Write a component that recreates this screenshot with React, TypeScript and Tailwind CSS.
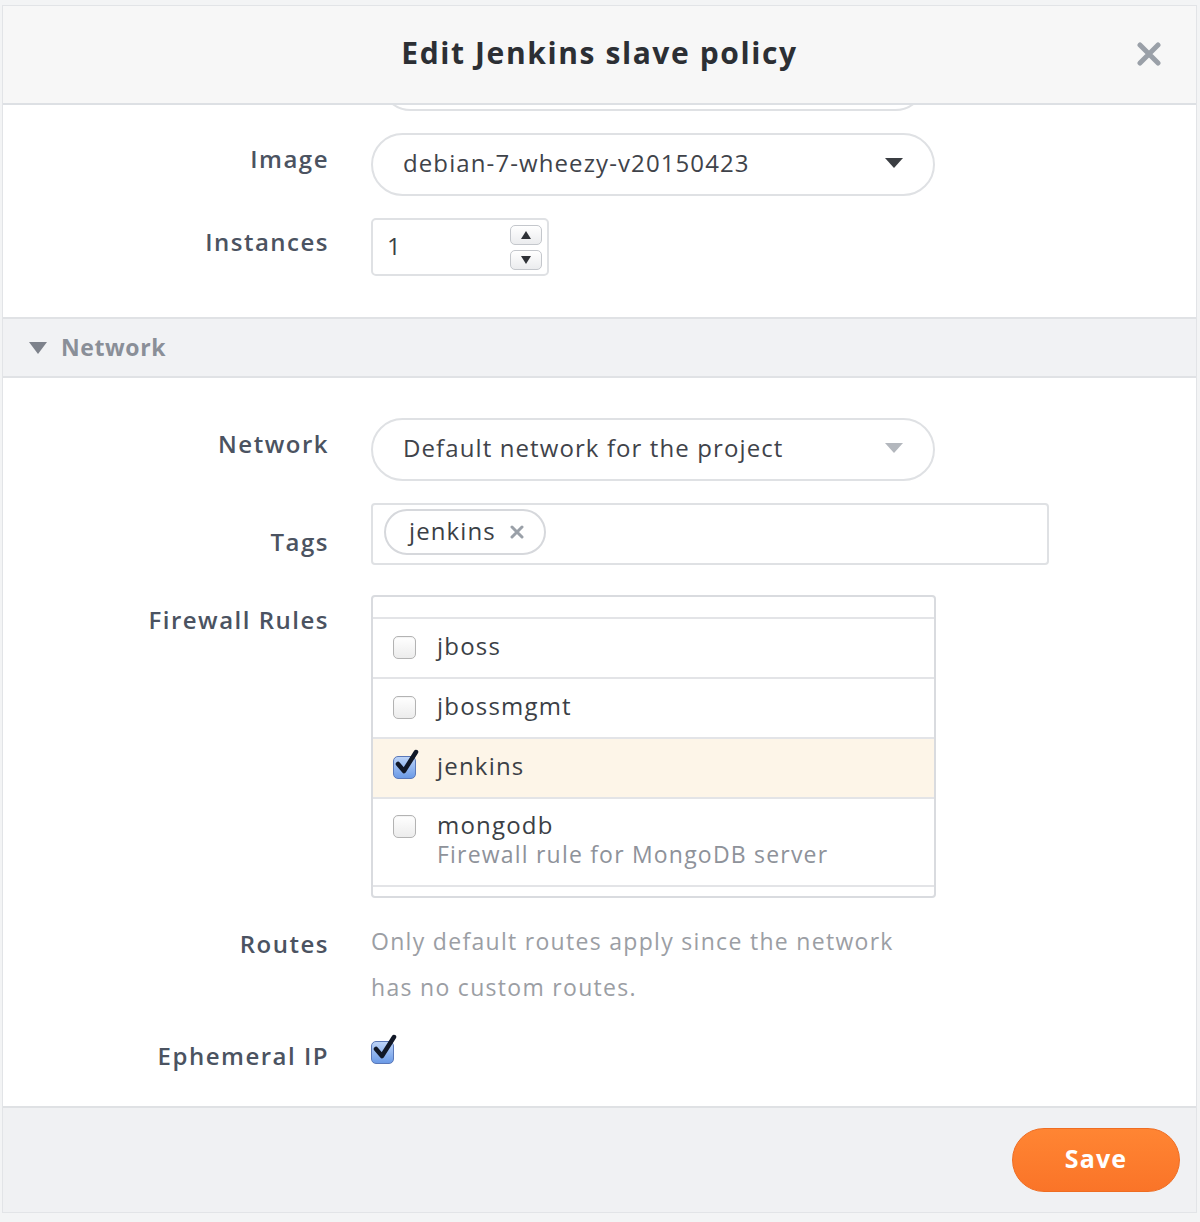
import React from 'react';

const font = { fontFamily: '"Open Sans", "Liberation Sans", sans-serif' };

function Box({ checked = false }: { checked?: boolean }) {
  if (!checked) {
    return (
      <div className="w-[23px] h-[23px] rounded-[5px] border border-[#b3b3b3] bg-gradient-to-b from-white to-[#ececec] shadow-[inset_0_1px_1px_rgba(0,0,0,0.05)]" />
    );
  }
  return (
    <div className="relative w-[23px] h-[23px]">
      <div className="w-[23px] h-[23px] rounded-[5px] border border-[#5a78b8] bg-gradient-to-b from-[#bcd3f7] to-[#6b9ae6]" />
      <svg className="absolute left-[1px] -top-[7px]" width="26" height="28" viewBox="0 0 26 28">
        <path d="M4 15 L10 22 L22 3" fill="none" stroke="#111827" strokeWidth="4.5" strokeLinecap="round" strokeLinejoin="round" />
      </svg>
    </div>
  );
}

function Row({ label, pt, children, className = '' }: { label: string; pt: string; children: React.ReactNode; className?: string }) {
  return (
    <div className={`flex items-start ${className}`}>
      <div className={`w-[326px] shrink-0 text-right text-[24px] leading-[32px] font-semibold tracking-[1.5px] text-[#4b5361] ${pt}`}>{label}</div>
      <div className="ml-[42px]">{children}</div>
    </div>
  );
}

function Select({ value, light = false }: { value: string; light?: boolean }) {
  return (
    <div className="w-[564px] h-[63px] rounded-full border-2 border-[#dfe1e4] bg-white flex items-center justify-between pl-[30px] pr-[30px] pb-[3px]">
      <span className="text-[24px] tracking-[1.1px] text-[#3f434a]">{value}</span>
      <svg width="18" height="10" viewBox="0 0 18 10">
        <path d="M0 0 H18 L9 10 Z" fill={light ? '#b3b7bd' : '#3a3d42'} />
      </svg>
    </div>
  );
}

function Rule({ name, desc, checked = false }: { name: string; desc?: string; checked?: boolean }) {
  return (
    <div className={`flex items-start pl-[20px] border-t-2 border-[#e3e4e7] ${checked ? 'bg-[#fdf5e8]' : 'bg-white'} ${desc ? 'h-[88px] pt-[16px]' : 'h-[60px] pt-[17px]'}`}>
      <Box checked={checked} />
      <div className="ml-[21px] -mt-[5px] tracking-[1.2px]">
        <div className="text-[24px] leading-[30px] text-[#3b3f46]">{name}</div>
        {desc && <div className="text-[23px] leading-[28px] text-[#8e929a]">{desc}</div>}
      </div>
    </div>
  );
}

export default function App() {
  return (
    <div className="w-[1200px] h-[1222px] bg-[#f3f4f5] pt-[5px] pl-[2px] pr-[3px] pb-[9px]" style={font}>
      <div className="h-full flex flex-col border border-[#e2e4e7] bg-white overflow-hidden">
        {/* Header */}
        <header className="h-[99px] shrink-0 relative flex items-center justify-center pb-[4px] bg-[#f7f7f7] border-b-2 border-[#dde0e4]">
          <h1 className="text-[30px] font-bold text-[#2c2f34] tracking-[1.6px]">Edit Jenkins slave policy</h1>
          <svg className="absolute right-[35px] top-[36px]" width="24" height="24" viewBox="0 0 24 24">
            <path d="M3 3 L21 21 M21 3 L3 21" stroke="#9aa0a8" strokeWidth="5" strokeLinecap="round" />
          </svg>
        </header>

        {/* Body */}
        <div className="flex-1 overflow-hidden">
          <div className="ml-[377px] -mt-[55px] w-[546px] h-[61px] rounded-full border-2 border-[#dfe1e4]" />

          <Row label="Image" pt="pt-[10px]" className="mt-[22px]">
            <Select value="debian-7-wheezy-v20150423" />
          </Row>

          <Row label="Instances" pt="pt-[8px]" className="mt-[22px]">
            <div className="w-[178px] h-[58px] rounded-[5px] border-2 border-[#dfe1e4] flex items-center justify-between pl-[14px] pr-[5px]">
              <span className="text-[24px] text-[#3b3f46] pb-[3px]">1</span>
              <div className="flex flex-col gap-[5px]">
                <div className="w-[32px] h-[20px] rounded-[5px] border border-[#c4c7cc] bg-gradient-to-b from-white to-[#ebecee] flex items-center justify-center">
                  <svg width="10" height="8" viewBox="0 0 10 8"><path d="M5 0 L10 8 H0 Z" fill="#2f3237" /></svg>
                </div>
                <div className="w-[32px] h-[20px] rounded-[5px] border border-[#c4c7cc] bg-gradient-to-b from-white to-[#ebecee] flex items-center justify-center">
                  <svg width="10" height="8" viewBox="0 0 10 8"><path d="M0 0 H10 L5 8 Z" fill="#2f3237" /></svg>
                </div>
              </div>
            </div>
          </Row>

          {/* Network section */}
          <div className="mt-[41px] h-[61px] bg-[#f1f2f4] border-y-2 border-[#e0e2e5] flex items-center pl-[26px]">
            <svg width="18" height="12" viewBox="0 0 18 12"><path d="M0 0 H18 L9 12 Z" fill="#7d828b" /></svg>
            <span className="ml-[14px] text-[23px] font-bold tracking-[0.6px] text-[#8a8f98]">Network</span>
          </div>

          <Row label="Network" pt="pt-[10px]" className="mt-[40px]">
            <Select value="Default network for the project" light />
          </Row>

          <Row label="Tags" pt="pt-[23px]" className="mt-[22px]">
            <div className="w-[678px] h-[62px] rounded-[4px] border-2 border-[#dfe1e4] flex items-center pl-[11px]">
              <div className="h-[46px] rounded-full border-2 border-[#d6d8dc] flex items-center pl-[23px] pr-[20px] mb-[4px]">
                <span className="text-[24px] tracking-[1.1px] text-[#3b3f46] pb-[2px]">jenkins</span>
                <svg className="ml-[14px]" width="14" height="14" viewBox="0 0 14 14">
                  <path d="M2 2 L12 12 M12 2 L2 12" stroke="#9aa0a8" strokeWidth="3" strokeLinecap="round" />
                </svg>
              </div>
            </div>
          </Row>

          <Row label="Firewall Rules" pt="pt-[9px]" className="mt-[30px]">
            <div className="w-[565px] h-[303px] rounded-[4px] border-2 border-[#d9dbdf] overflow-hidden">
              <div className="h-[20px]" />
              <Rule name="jboss" />
              <Rule name="jbossmgmt" />
              <Rule name="jenkins" checked />
              <Rule name="mongodb" desc="Firewall rule for MongoDB server" />
              <div className="border-t-2 border-[#e3e4e7] h-[12px]" />
            </div>
          </Row>

          <Row label="Routes" pt="pt-[10px]" className="mt-[20px]">
            <div className="text-[23px] leading-[46px] tracking-[1.3px] text-[#9b9ea4]">
              Only default routes apply since the network
              <br />
              has no custom routes.
            </div>
          </Row>

          <Row label="Ephemeral IP" pt="pt-[4px]" className="mt-[26px]">
            <div className="pt-[5px]"><Box checked /></div>
          </Row>
        </div>

        {/* Footer */}
        <footer className="h-[106px] shrink-0 bg-[#f0f1f3] border-t-2 border-[#dfe1e4] flex items-center justify-end pr-[16px]">
          <button className="w-[168px] h-[64px] rounded-full bg-gradient-to-b from-[#ff8533] to-[#fa7428] border border-[#ef6d22] text-white text-[25px] font-bold tracking-[1.2px] pb-[2px]">
            Save
          </button>
        </footer>
      </div>
    </div>
  );
}
